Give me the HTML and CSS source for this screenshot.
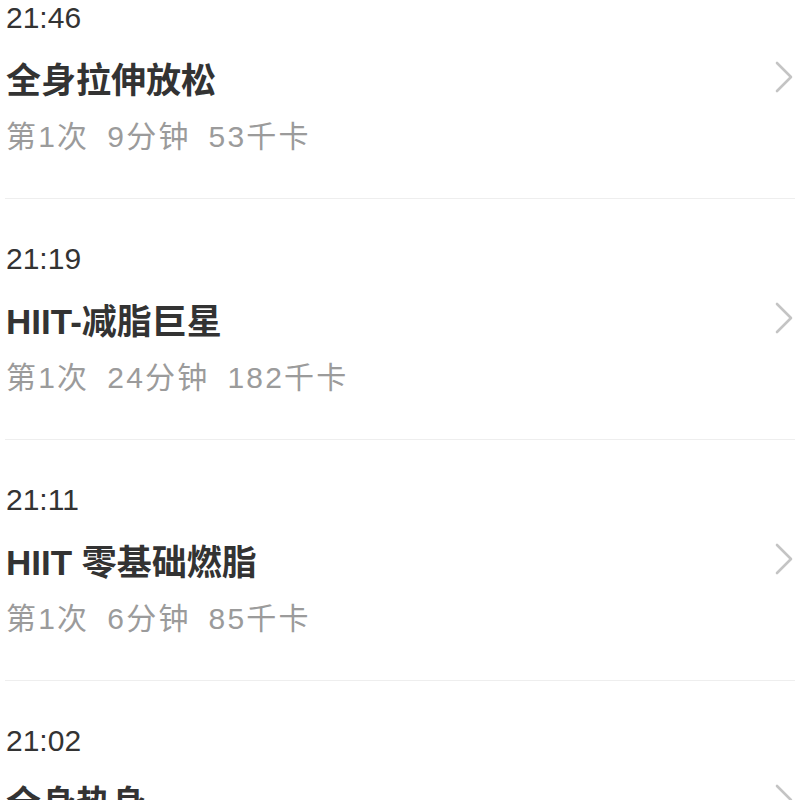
FILE: index.html
```html
<!DOCTYPE html>
<html lang="zh-CN">
  <head>
    <meta charset="UTF-8" />
    <meta name="viewport" content="width=device-width, initial-scale=1.0" />
    <title>训练记录</title>
    <link rel="stylesheet" href="styles.css">
  </head>
  <body>
    <ul class="record-list">
      <li class="record">
        <div class="time">21:46</div>
        <div class="title-row">
          <span class="title">全身拉伸放松</span>
          <svg class="chevron" viewBox="0 0 20 34"><path d="M3 3 L17 17 L3 31" /></svg>
        </div>
        <div class="meta"><span>第1次</span><span>9分钟</span><span>53千卡</span></div>
      </li>
      <li class="record">
        <div class="time">21:19</div>
        <div class="title-row">
          <span class="title">HIIT-减脂巨星</span>
          <svg class="chevron" viewBox="0 0 20 34"><path d="M3 3 L17 17 L3 31" /></svg>
        </div>
        <div class="meta"><span>第1次</span><span>24分钟</span><span>182千卡</span></div>
      </li>
      <li class="record">
        <div class="time">21:11</div>
        <div class="title-row">
          <span class="title">HIIT 零基础燃脂</span>
          <svg class="chevron" viewBox="0 0 20 34"><path d="M3 3 L17 17 L3 31" /></svg>
        </div>
        <div class="meta"><span>第1次</span><span>6分钟</span><span>85千卡</span></div>
      </li>
      <li class="record">
        <div class="time">21:02</div>
        <div class="title-row">
          <span class="title">全身热身</span>
          <svg class="chevron" viewBox="0 0 20 34"><path d="M3 3 L17 17 L3 31" /></svg>
        </div>
        <div class="meta"><span>第1次</span><span>5分钟</span><span>30千卡</span></div>
      </li>
    </ul>
  </body>
</html>
```

FILE: styles.css
```css
body {
  font-family: "Liberation Sans", "Noto Sans CJK SC", sans-serif;
  background-color: #fff;
  color: #333;
  margin: 0;
  padding: 0;
  overflow: hidden;
}
.record-list {
  list-style: none;
  margin: 0;
  padding: 0 5px;
}
.record {
  padding: 42px 1px 41px;
  border-bottom: 1px solid #eeeeee;
}
.record:first-child {
  padding-top: 0;
}
.time {
  font-size: 30px;
  line-height: 36px;
  color: #333;
}
.title-row {
  display: flex;
  align-items: center;
  justify-content: space-between;
  margin-top: 15px;
  height: 52px;
}
.title {
  font-size: 35px;
  font-weight: 700;
  color: #333;
}
.chevron {
  width: 20px;
  height: 34px;
  fill: none;
  stroke: #c4c4c4;
  stroke-width: 2.6;
  stroke-linecap: round;
  stroke-linejoin: round;
}
.meta {
  margin-top: 14px;
  font-size: 30px;
  line-height: 40px;
  letter-spacing: 2.2px;
  color: #9b9b9b;
}
.meta span {
  margin-right: 18px;
}
```
